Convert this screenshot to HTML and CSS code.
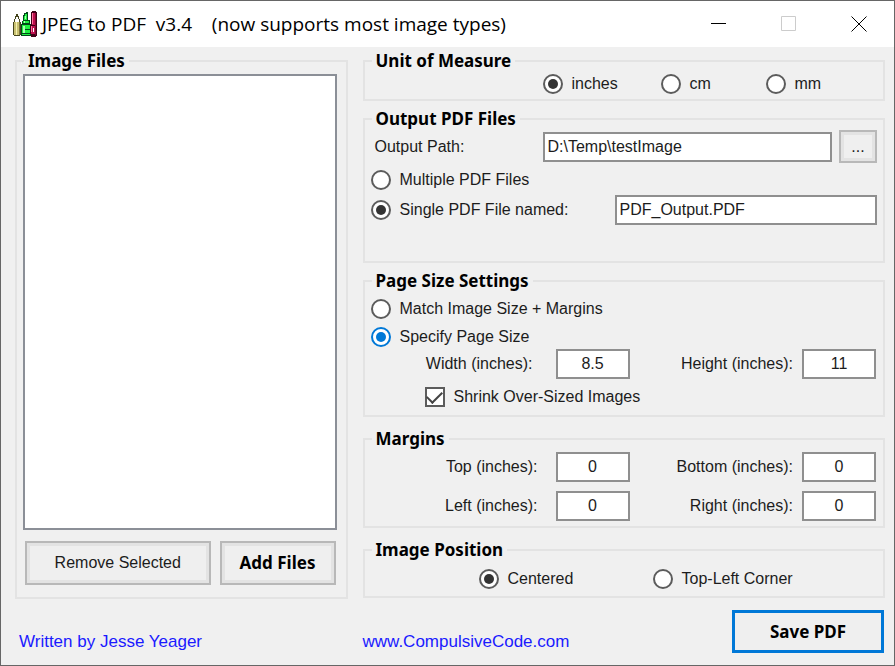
FILE: index.html
```html
<!DOCTYPE html>
<html lang="en">
<head>
<meta charset="utf-8">
<title>JPEG to PDF</title>
<link rel="stylesheet" href="styles.css">
</head>
<body>
<form class="window">
  <header class="titlebar">
    <svg class="app-icon" viewBox="0 0 24 26" shape-rendering="crispEdges" aria-hidden="true">
      <path fill="#44441c" d="M3 3h2v2h1v3h1v3h1v13H7v1H1v-1H0V11h1V8h1V5h1z"/>
      <path fill="#fff" d="M3 6h2v2h1v3H2V8h1z"/>
      <path fill="#c8c070" d="M1 11h2v13H1zM4 11h2v13H4z"/>
      <path fill="#f4f0b0" d="M3 11h1v13H3z"/>
      <path fill="#77703c" d="M6 11h1v13H6z"/>
      <path fill="#004818" d="M13 1h2v8h2v4h1v12H8V13h1v-3h1V4h1V2h2z"/>
      <path fill="#20f040" d="M12 3h2v6h-3V5h1zM10 10h6v2h-6zM9 14h8v10H9z"/>
      <path fill="#a8ffb0" d="M12 5h1v3h-1zM11 10h1v2h-1zM10 15h2v7h-2z"/>
      <path fill="#004818" d="M12 18h5v1h-5zM9 22h8v1H9z"/>
      <path fill="#400018" d="M18 1h1V0h4v1h1v24h-1v1h-5v-3h-1v-9h1z"/>
      <path fill="#c01050" d="M19 2h3v12h-3zM18 15h4v8h-4z"/>
      <path fill="#ff70a0" d="M19 2h1v11h-1zM18 15h1v6h-1z"/>
      <path fill="#fff" d="M20 17h1v4h-1z"/>
      <path fill="#800830" d="M22 2h1v22h-1z"/>
    </svg>
    <h1 class="title">JPEG to PDF  v3.4    (now supports most image types)</h1>
    <div class="window-controls">
      <button type="button" class="control" aria-label="Minimize"><svg viewBox="0 0 16 16"><path d="M0 7.500h15"/></svg></button>
      <button type="button" class="control" aria-label="Maximize" disabled><svg viewBox="0 0 16 16"><path d="M.5.5h14v14H.5z"/></svg></button>
      <button type="button" class="control" aria-label="Close"><svg viewBox="0 0 16 16"><path d="M.5.5l15 15M15.500.5l-15 15"/></svg></button>
    </div>
  </header>

  <main class="columns content">
    <fieldset class="group files">
      <legend>Image Files</legend>
      <div class="files-body">
        <select class="file-list" multiple aria-label="Image Files"></select>
        <div class="file-actions">
          <button type="button" class="button remove">Remove Selected</button>
          <button type="button" class="button add strong">Add Files</button>
        </div>
      </div>
    </fieldset>

    <div class="settings">
      <fieldset class="group">
        <legend>Unit of Measure</legend>
        <div class="units">
          <label class="option"><input type="radio" name="unit" checked>inches</label>
          <label class="option"><input type="radio" name="unit">cm</label>
          <label class="option"><input type="radio" name="unit">mm</label>
        </div>
      </fieldset>

      <fieldset class="group">
        <legend>Output PDF Files</legend>
        <div class="output">
          <div class="path-row">
            <label class="path-label" for="path">Output Path:</label>
            <input class="field" id="path" type="text" value="D:\Temp\testImage">
            <button type="button" class="button browse">...</button>
          </div>
          <label class="option multiple"><input type="radio" name="output">Multiple PDF Files</label>
          <div class="name-row">
            <label class="option"><input type="radio" name="output" checked>Single PDF File named:</label>
            <input class="field" type="text" value="PDF_Output.PDF" aria-label="PDF file name">
          </div>
        </div>
      </fieldset>

      <fieldset class="group">
        <legend>Page Size Settings</legend>
        <div class="page-size">
          <label class="option"><input type="radio" name="size">Match Image Size + Margins</label>
          <label class="option"><input class="hot" type="radio" name="size" checked>Specify Page Size</label>
          <div class="measures">
            <label class="inset" for="width">Width (inches):</label>
            <input class="field number" id="width" type="text" value="8.5">
            <label for="height">Height (inches):</label>
            <input class="field number" id="height" type="text" value="11">
          </div>
          <label class="option shrink"><input type="checkbox" checked>Shrink Over-Sized Images</label>
        </div>
      </fieldset>

      <fieldset class="group spaced">
        <legend>Margins</legend>
        <div class="measures margins">
          <label for="top">Top (inches):</label>
          <input class="field number" id="top" type="text" value="0">
          <label for="bottom">Bottom (inches):</label>
          <input class="field number" id="bottom" type="text" value="0">
          <label for="left">Left (inches):</label>
          <input class="field number" id="left" type="text" value="0">
          <label for="right">Right (inches):</label>
          <input class="field number" id="right" type="text" value="0">
        </div>
      </fieldset>

      <fieldset class="group spaced">
        <legend>Image Position</legend>
        <div class="position">
          <label class="option"><input type="radio" name="position" checked>Centered</label>
          <label class="option"><input type="radio" name="position">Top-Left Corner</label>
        </div>
      </fieldset>
    </div>
  </main>

  <footer class="columns footer">
    <a class="author" href="#">Written by Jesse Yeager</a>
    <div class="footer-end">
      <a href="#">www.CompulsiveCode.com</a>
      <button type="button" class="button save strong">Save PDF</button>
    </div>
  </footer>
</form>
</body>
</html>
```
FILE: styles.css
```css
* {
  box-sizing: border-box;
}

body {
  margin: 0;
  background: #f0f0f0;
  color: #1c1c1c;
  font: 16px/20px "Liberation Sans", Arial, sans-serif;
}

button,
input,
select {
  margin: 0;
  color: inherit;
  font: inherit;
}

.window {
  display: flex;
  flex-direction: column;
  min-height: 100vh;
  border: 1px solid #666;
}

/* Title bar */
.titlebar {
  display: flex;
  align-items: center;
  height: 46px;
  padding-left: 12px;
  background: #fff;
}

.app-icon {
  width: 24px;
  height: 26px;
  margin-right: 5px;
}

.title {
  flex: 1;
  margin: 0;
  color: #000;
  font: 19px/26px "Open Sans", "Noto Sans", sans-serif;
  white-space: pre;
}

.window-controls {
  display: flex;
}

.control {
  display: grid;
  place-items: center;
  width: 70px;
  height: 46px;
  padding: 0;
  border: 0;
  background: none;
}

.control svg {
  width: 16px;
  height: 16px;
  fill: none;
  stroke: #000;
}

.control:disabled svg {
  stroke: #ccc;
}

/* Page columns, shared by the content and the footer */
.columns {
  display: grid;
  grid-template-columns: 7fr 11fr;
  column-gap: 15px;
  padding: 0 9px 0 14px;
}

.content {
  flex: 1;
  padding-top: 5px;
}

.settings {
  display: flex;
  flex-direction: column;
  gap: 9px;
}

.group {
  min-width: 0;
  margin: 0;
  padding: 0;
  border: 2px solid #e3e3e3;
}

.group.spaced {
  margin-top: 4px;
}

legend {
  margin-left: 7px;
  padding: 0 4px;
}

legend,
.strong {
  color: #000;
  font: bold 17px/18px "Noto Sans", sans-serif;
}

/* Controls */
.option {
  display: flex;
  align-items: center;
  gap: 9px;
  height: 20px;
}

.option input {
  display: grid;
  flex: none;
  place-items: center;
  width: 20px;
  height: 20px;
  border: 2px solid #5c5c5c;
  background: #fff;
  appearance: none;
}

.option input[type="radio"] {
  border-radius: 50%;
}

.option input[type="radio"]:checked::before {
  width: 10px;
  height: 10px;
  border-radius: 50%;
  background: #333;
  content: "";
}

.option .hot {
  border-color: #0078d7;
}

.option input.hot:checked::before {
  background: #0078d7;
}

.option input[type="checkbox"]:checked::before {
  width: 13px;
  height: 7px;
  border: solid #444;
  border-width: 0 0 2px 2px;
  transform: translateY(-2px) rotate(-45deg);
  content: "";
}

.field {
  width: 100%;
  min-width: 0;
  height: 30px;
  padding: 0 3px;
  border: 2px solid #8f8f8f;
  background: #fff;
}

.number {
  text-align: center;
}

.button {
  padding: 0;
  border: 2px solid #b8b8b8;
  background: #efefef;
  box-shadow: inset 0 0 0 3px #e3e3e3;
}

/* Image files */
.files {
  display: flex;
  flex-direction: column;
}

.files-body {
  display: flex;
  flex: 1;
  flex-direction: column;
  gap: 11px;
  padding: 4px 9px 12px 6px;
}

.file-list {
  flex: 1;
  width: 100%;
  border: 2px solid #8b8f97;
  border-radius: 0;
  background: #fff;
}

.file-actions {
  display: grid;
  grid-template-columns: 8fr 5fr;
  gap: 9px;
  padding: 0 1px 0 2px;
}

.file-actions .button {
  height: 44px;
}

/* Settings groups */
.units {
  display: grid;
  grid-template-columns: 118px 105px 1fr;
  padding: 4px 0 5px 178px;
}

.output {
  padding: 2px 6px 36px;
}

.path-row {
  display: grid;
  grid-template-columns: 165px 1fr 38px;
  align-items: center;
  column-gap: 7px;
}

.path-label {
  padding-left: 4px;
}

.browse {
  height: 33px;
}

.multiple {
  margin: 7px 0 5px;
}

.name-row {
  display: grid;
  grid-template-columns: 244px 1fr;
  align-items: center;
}

.page-size {
  display: grid;
  gap: 8px;
  padding: 9px 7px 8px 6px;
}

.measures {
  display: grid;
  grid-template-columns: 185px 74px 1fr 74px;
  align-items: center;
  row-gap: 9px;
  text-align: right;
}

.measures label {
  padding-right: 9px;
}

.measures label:nth-of-type(odd) {
  padding-right: 18px;
}

.measures .inset:nth-of-type(odd) {
  padding-right: 23px;
}

.page-size .measures {
  margin-top: -6px;
}

.margins {
  padding: 4px 7px 5px 6px;
}

.shrink {
  margin-left: 54px;
}

.position {
  display: grid;
  grid-template-columns: 174px 1fr;
  padding: 10px 0 7px 114px;
}

/* Footer */
.footer {
  align-items: center;
  padding-top: 11px;
  padding-bottom: 12px;
}

.footer-end {
  display: flex;
  align-items: center;
  justify-content: space-between;
  padding-right: 1px;
}

.footer a {
  padding-top: 20px;
  color: #1a1aff;
  font-size: 17px;
  text-decoration: none;
}

.author {
  padding-left: 4px;
}

.save {
  width: 152px;
  height: 43px;
  border: 3px solid #0078d7;
  box-shadow: none;
}
```
